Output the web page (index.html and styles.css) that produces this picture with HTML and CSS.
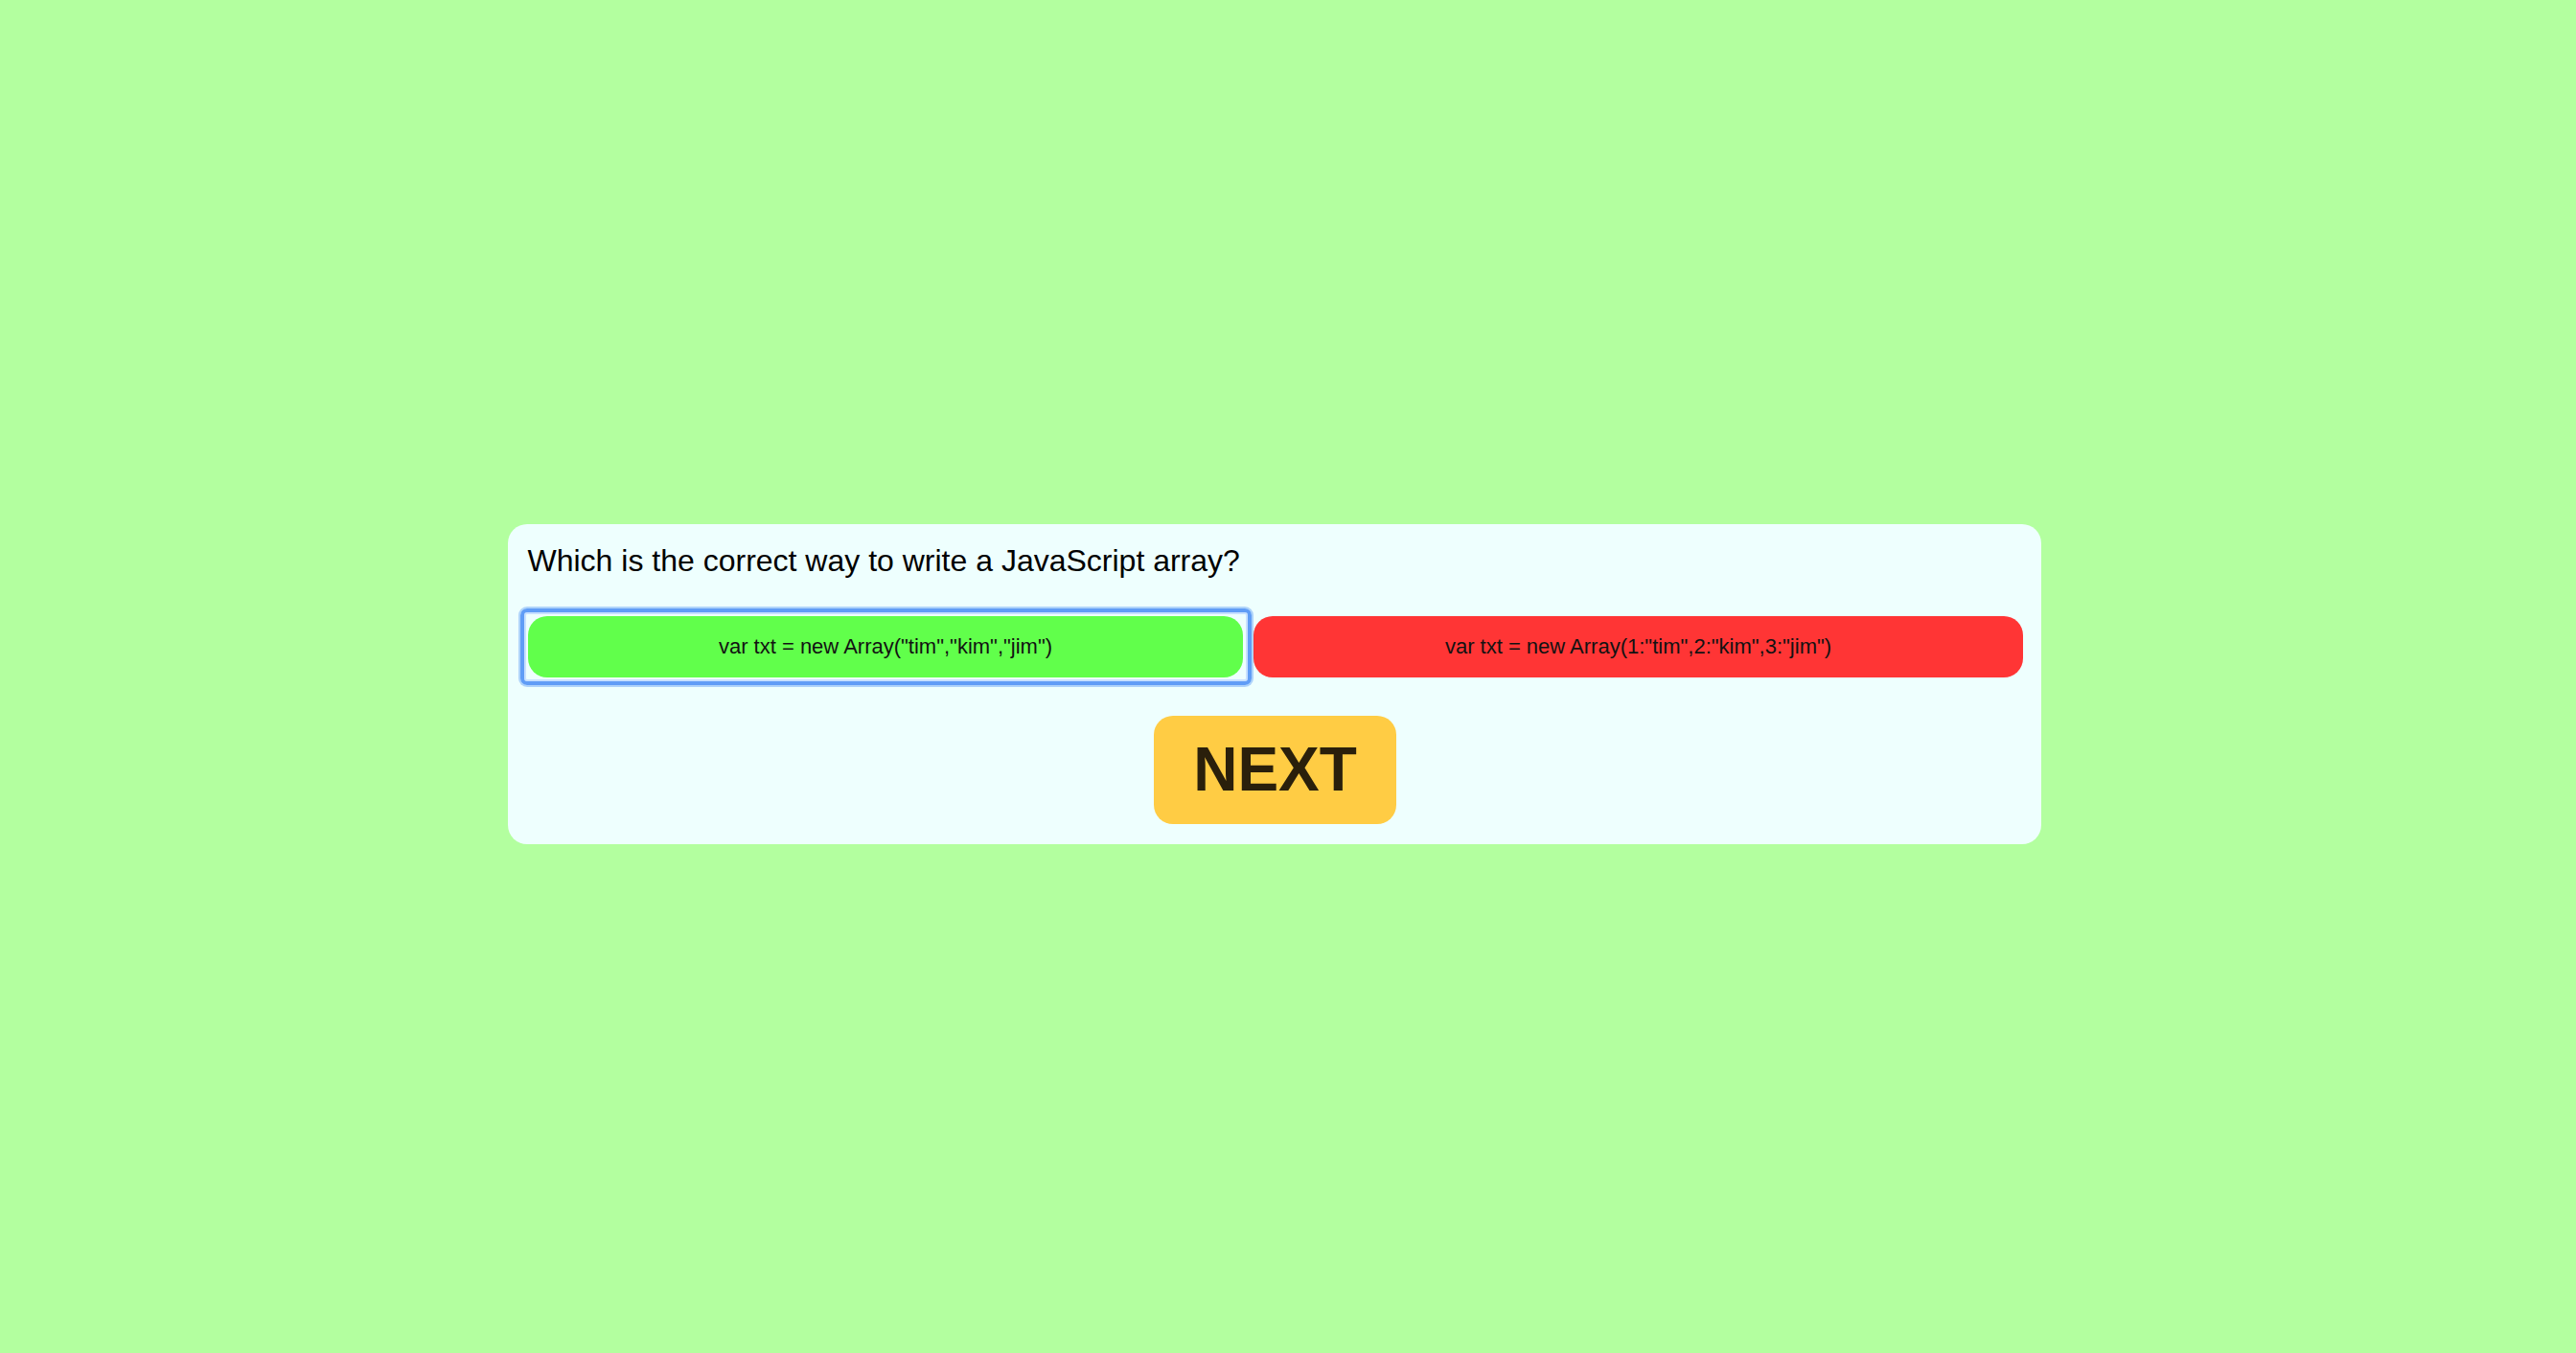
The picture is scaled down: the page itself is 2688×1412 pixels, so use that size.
FILE: index.html
```html
<!DOCTYPE html>
<html lang="en">
<head>
<meta charset="utf-8">
<title>Quiz</title>
<link rel="stylesheet" href="styles.css">
</head>
<body>
<main class="stage">
  <section class="card">
    <h2 class="question">Which is the correct way to write a JavaScript array?</h2>
    <div class="answers">
      <button class="answer correct focused">var txt = new Array("tim","kim","jim")</button>
      <button class="answer wrong">var txt = new Array(1:"tim",2:"kim",3:"jim")</button>
    </div>
    <button class="next">NEXT</button>
  </section>
</main>
</body>
</html>
```
FILE: styles.css
```css
html, body {
  margin: 0;
  padding: 0;
  background: #b3ff9f;
}

body {
  font-family: "Liberation Sans", Arial, sans-serif;
}

.stage {
  min-height: 1412px;
  box-sizing: border-box;
  display: flex;
  align-items: center;
  justify-content: center;
  padding: 16px 29px 0 0;
}

.card {
  width: 1600px;
  box-sizing: border-box;
  background: #eefffe;
  border-radius: 20px;
  padding: 20px 19px 21px 21px;
  display: flex;
  flex-direction: column;
}

.question {
  margin: 0;
  font-size: 32px;
  font-weight: normal;
  line-height: 37px;
  color: #000;
}

.answers {
  margin-top: 39px;
  display: flex;
  gap: 11px;
}

.answer {
  flex: 1 1 auto;
  height: 64px;
  border: none;
  border-radius: 20px;
  font-family: "Liberation Sans", Arial, sans-serif;
  font-size: 22px;
  color: #121212;
  padding: 0 10px;
  position: relative;
}

.correct {
  background: #61ff4b;
}

.wrong {
  background: #ff3535;
}

.focused::after {
  content: "";
  position: absolute;
  top: -8px;
  bottom: -8px;
  left: -8px;
  right: -9px;
  border: 4px solid #609df6;
  border-radius: 7px;
  box-shadow: 0 0 0 2px rgba(96, 157, 246, 0.45), inset 0 0 0 2px rgba(190, 218, 255, 0.8);
}

.next {
  align-self: center;
  margin-top: 40px;
  border: none;
  border-radius: 20px;
  background: #ffcc44;
  color: #2a1f0b;
  font-family: "Liberation Sans", Arial, sans-serif;
  font-weight: bold;
  font-size: 64px;
  line-height: 73px;
  padding: 20px 41px;
}
```
